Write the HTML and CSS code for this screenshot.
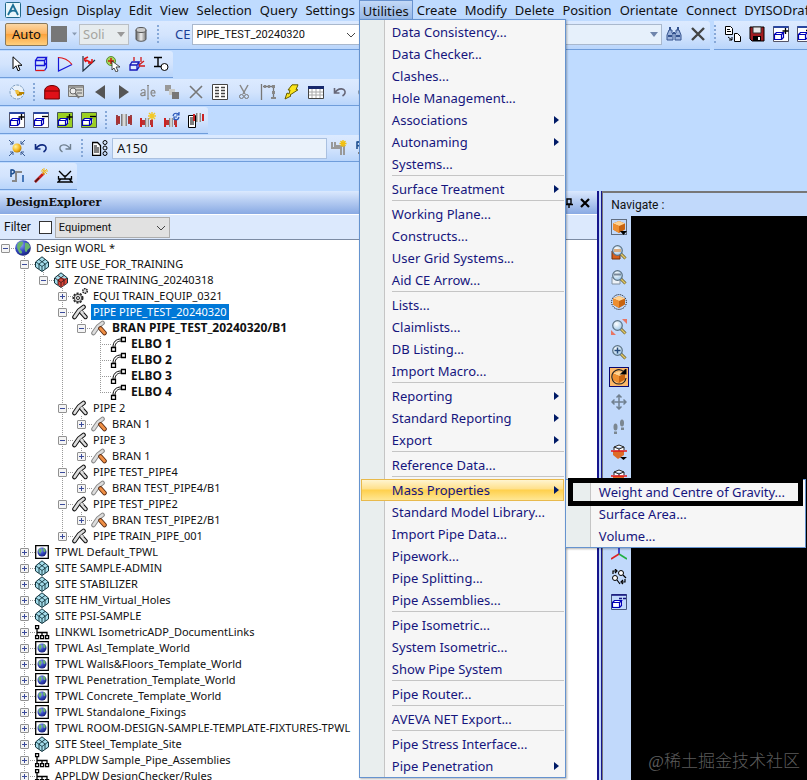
FILE: index.html
```html
<!DOCTYPE html>
<html lang="en">
<head>
<meta charset="UTF-8" />
<meta name="viewport" content="width=device-width, initial-scale=1" />
<title>Design</title>
<link rel="stylesheet" href="styles.css">
</head>
<body>

<!-- Icon set -->
<svg class="sprite" aria-hidden="true">
  <defs>
    <linearGradient id="steel" x1="0" y1="0" x2="1" y2="0"><stop offset="0" stop-color="#666"/><stop offset=".5" stop-color="#eee"/><stop offset="1" stop-color="#777"/></linearGradient>
    <radialGradient id="earth" cx=".35" cy=".3" r=".8"><stop offset="0" stop-color="#9aaef5"/><stop offset=".5" stop-color="#3447c4"/><stop offset="1" stop-color="#141c6c"/></radialGradient>
    <radialGradient id="gold" cx=".35" cy=".35" r=".7"><stop offset="0" stop-color="#fff3a0"/><stop offset=".6" stop-color="#f5b820"/><stop offset="1" stop-color="#b87800"/></radialGradient>
    <radialGradient id="lens" cx=".4" cy=".35" r=".7"><stop offset="0" stop-color="#fff"/><stop offset="1" stop-color="#9cc7e8"/></radialGradient>

    <symbol id="app" viewBox="0 0 16 16"><rect x=".5" y=".5" width="15" height="15" rx="1" fill="#e9f6fb" stroke="#21688a"/><path d="M3 13 8 3l5 10M5 10c2-2 4-2 7 0" fill="none" stroke="#1c6f96" stroke-width="1.8"/></symbol>
    <symbol id="cylinder" viewBox="0 0 16 16"><path d="M3 4v9c0 3 10 3 10 0V4z" fill="url(#steel)" stroke="#555"/><ellipse cx="8" cy="4" rx="5" ry="2.5" fill="#ccc" stroke="#555"/></symbol>
    <symbol id="find" viewBox="0 0 16 16"><path d="M3 4h3v3l1 1v6H1V9zM13 4h-3v3L9 8v6h6V9z" fill="#9db4dd" stroke="#34528e"/><path d="M4 1v3M12 1v3M7 7h2M2 10h4M10 10h4" stroke="#34528e" stroke-width="2"/></symbol>
    <symbol id="cross" viewBox="0 0 16 16"><path d="M2 2l12 12M14 2 2 14" stroke="#444" stroke-width="2.4"/></symbol>
    <symbol id="copy" viewBox="0 0 16 16"><path d="M.5.5h5l2 2v6h-7zM9.500 7.500h3l3 3v5h-6z" fill="#fff" stroke="#000"/><path d="M2 3.500h3M2 5.500h4M3 11l4 3M7 11v3H4" fill="none" stroke="#000"/></symbol>
    <symbol id="save" viewBox="0 0 16 16"><path d="M1 1h14v14H3l-2-2z" fill="#a11c20" stroke="#000"/><path d="M4 1h8v6H4z" fill="#e8e8e8" stroke="#333"/><path d="M4 10h8v5H4z"/><path d="M9 11h2v3H9z" fill="#fff"/></symbol>
    <symbol id="boxes" viewBox="0 0 16 16"><path d="M4.500 6.500h7v4l-2 2h-8v-4z" fill="#fff"/><path d="M1.500 8.500h7v5h-7zM1.500 8.500l2-2h7l-2 2M10.500 6.500v5l-2 2" fill="none" stroke="#0000b8" stroke-width="1.200"/></symbol>
    <symbol id="boxadd" viewBox="0 0 16 16"><path d="M.5.5h15v15H.500z" fill="#fff" stroke="#556"/><path d="M.5 1h15" stroke="#2946a0" stroke-width="2"/><use href="#boxes"/><path d="M12.500 2v6M9.500 5h6" stroke="#000" stroke-width="1.300"/></symbol>
    <symbol id="boxdel" viewBox="0 0 16 16"><path d="M.5.5h15v15H.500z" fill="#fff" stroke="#556"/><path d="M.5 1h15" stroke="#2946a0" stroke-width="2"/><use href="#boxes"/><path d="M9 4.500h6" stroke="#000" stroke-width="1.300"/></symbol>
    <symbol id="greenadd" viewBox="0 0 16 16"><path d="M.5.5h15v15H.500z" fill="#9bcf22" stroke="#455"/><use href="#boxes"/><path d="M12.500 2v6M9.500 5h6" stroke="#000" stroke-width="1.300"/></symbol>
    <symbol id="greendel" viewBox="0 0 16 16"><path d="M.5.5h15v15H.500z" fill="#9bcf22" stroke="#455"/><use href="#boxes"/><path d="M9 4.500h6" stroke="#000" stroke-width="1.300"/></symbol>

    <symbol id="cursor" viewBox="0 0 16 16"><path d="M4 .8v12l3-3 2 5 2-1-2-4.500h4z" fill="#fff" stroke="#000"/></symbol>
    <symbol id="box3d" viewBox="0 0 16 16"><path d="M2.500 4.500h9v5h-9zM2.500 4.500l2-3h9l-2 3M13.500 1.500v10l-2 3M11.500 9.500l2-3" fill="none" stroke="#1616d8" stroke-width="1.300"/><path d="M2.500 9.500v5" stroke="#1616d8"/><path d="M2.500 14.500h9" fill="none" stroke="#e01515" stroke-width="1.300"/></symbol>
    <symbol id="arc" viewBox="0 0 16 16"><path d="M1.500 1v14L15 8.500" fill="none" stroke="#1616d8" stroke-width="1.200"/><path d="M1 1.500c6 0 10 2 14 7" fill="none" stroke="#e01515" stroke-width="1.200"/></symbol>
    <symbol id="angle" viewBox="0 0 16 16"><path d="M2 0v15L14 4" fill="none" stroke="#234" stroke-width="1.200"/><path d="M3 3l8 4M3 3l4-2M3 3l2 3M11 7V3M11 7H7" stroke="#e01515" stroke-width="1.500"/></symbol>
    <symbol id="pick" viewBox="0 0 16 16"><circle cx="6" cy="5" r="4.500" fill="#a4d65b" stroke="#5a8f35"/><path d="M6 2v6M3 5h6" stroke="#d01a10" stroke-width="1.500"/><path d="M7 5v9l2-2 2 4 2-1-2-4h4z" fill="#fff" stroke="#222" stroke-width=".8"/></symbol>
    <symbol id="place" viewBox="0 0 16 16"><path d="M1 9h7v5H1zM1 9l2-3h7l-2 3M10 6v5l-2 3" fill="#dfeaff" stroke="#1616b8" stroke-width="1.300"/><path d="M5 5V1M12 1v5M10 9l5-4M10 10h6" stroke="#d01a1a" stroke-width="1.300"/></symbol>
    <symbol id="tee" viewBox="0 0 16 16"><path d="M1 1.500h8M5 1.500v9M1 10.500h8" stroke="#000" stroke-width="1.400"/><circle cx="11.500" cy="11" r="3.500" fill="#fff" stroke="#000"/></symbol>

    <symbol id="palette" viewBox="0 0 16 16"><circle cx="8" cy="8" r="7" fill="#e9f1fa" stroke="#7c9cbd" stroke-dasharray="3 1"/><path d="M6 6h3l2 2v2h-4z" fill="#f0c040"/><path d="M10 9h5M8 11l5-1" stroke="#b98400" stroke-width="2"/><path d="M3 4l3 3" stroke="#4a7dc0" stroke-dasharray="1 1"/></symbol>
    <symbol id="shop" viewBox="0 0 16 16"><path d="M.7 15V6c1-6 13.600-6 14.600 0v9z" fill="#e01018" stroke="#6a0000"/><path d="M1 7h14" stroke="#7a0000"/></symbol>
    <symbol id="search" viewBox="0 0 16 16"><path d="M.5 1.500h15v11H.500z" fill="#d5d5cf" stroke="#777"/><path d="M1 3h14M8 6h6M9 9h5" stroke="#888" stroke-width="1.500"/><circle cx="5" cy="7" r="3" fill="#eee" stroke="#666"/><path d="M7 9l4 5" stroke="#777" stroke-width="2"/></symbol>
    <symbol id="prev" viewBox="0 0 16 16"><path d="M13 1v14L3 8z" fill="#555"/></symbol>
    <symbol id="next" viewBox="0 0 16 16"><path d="M3 1v14l10-7z" fill="#555"/></symbol>
    <symbol id="rename" viewBox="0 0 16 16"><path d="M1 7c1-2 4-2 4 0v5M5 9C2 8 0 10 1 11s3 1 4-1M11 9h4c0-4-4-3-4 0s3 4 4 2M8 2v13M7 1.500h2M7 15h2" fill="none" stroke="#888" stroke-width="1.200"/></symbol>
    <symbol id="group" viewBox="0 0 16 16"><path d="M1 1h6v6H1z" fill="#999"/><path d="M5 5h6v6H5z" fill="#c9cbc9"/><path d="M8 8h7v7H8z" fill="#777"/></symbol>
    <symbol id="remove" viewBox="0 0 16 16"><path d="M2 2l12 12M14 2 2 14" stroke="#777" stroke-width="1.600"/></symbol>
    <symbol id="list" viewBox="0 0 16 16"><path d="M.5.5h15v15H.500z" fill="#fff" stroke="#444"/><path d="M3 3.500h4M9 3.500h4M3 6.500h4M9 6.500h4M3 9.500h4M9 9.500h4M3 12.500h4M9 12.500h4" stroke="#444" stroke-width="1.600"/></symbol>
    <symbol id="cut" viewBox="0 0 16 16"><path d="M4 1l5 9M12 1l-5 9" stroke="#888" stroke-width="1.500"/><circle cx="5.500" cy="12.500" r="2" fill="none" stroke="#777"/><circle cx="10.500" cy="12.500" r="2" fill="none" stroke="#777"/></symbol>
    <symbol id="frame" viewBox="0 0 16 16"><path d="M1.500 0v16M3 2.500h11M13.500 2v11" fill="none" stroke="#777" stroke-width="1.300"/><path d="M4 1h2v3H4zM8 1h2v3H8zM12 1h3v3h-3zM12 7h3v3h-3zM11 13h5v2h-5z" fill="#888"/></symbol>
    <symbol id="bolt" viewBox="0 0 16 16"><path d="M8 .8h6l-2 5h2L6 11l1 1-6 3 2-6 2 1 1-4H4z" fill="#fbe51b" stroke="#665d00"/></symbol>
    <symbol id="table" viewBox="0 0 16 16"><path d="M.5 2.500h15v12H.500z" fill="#fff" stroke="#444"/><path d="M0 2h16v3H0z" fill="#16286c"/><path d="M1 8h14M1 11h14M4 5v9M8 5v9M12 5v9" stroke="#aaa"/></symbol>
    <symbol id="undo" viewBox="0 0 16 16"><path d="M2.500 4v5h5M3 9c3-6 11-5 10 0-.3 1.500-1 2-2.500 3" fill="none" stroke="currentColor" stroke-width="1.600"/></symbol>
    <symbol id="redo" viewBox="0 0 16 16"><path d="M13.500 4v5h-5M13 9C10 3 2 4 3 9c.3 1.500 1 2 2.500 3" fill="none" stroke="#708090" stroke-width="1.400"/></symbol>

    <symbol id="flange" viewBox="0 0 16 16"><path d="M1 3v10M3 4v8M13 4v8M15 3v10" stroke="#8c1a1a" stroke-width="1.600"/><path d="M0 5h4v6H0zM12 5h4v6h-4z" fill="#a33"/><path d="M5 2h6v12H5z" fill="url(#steel)"/></symbol>
    <symbol id="flangenew" viewBox="0 0 16 16"><path d="M1 6v9M12 7v8" stroke="#c22" stroke-width="2"/><path d="M2 8h3v5H2zM10 8h3v5h-3z" fill="#b33"/><path d="M5 6h4v9H5z" fill="url(#steel)"/><path d="M12 0v8M8 4h8M9 1l6 6M15 1 9 7" stroke="#f2c928" stroke-width="1.400"/></symbol>
    <symbol id="flangeturn" viewBox="0 0 16 16"><path d="M1 6v9M12 8v7" stroke="#c22" stroke-width="2"/><path d="M2 8h3v5H2zM10 8h3v5h-3z" fill="#b33"/><path d="M5 6h4v9H5z" fill="url(#steel)"/><path d="M9 4c1-4 5-3 6-1M15 0v3h-3M15 5c-1 4-5 3-5 1M10 8V5h3" fill="none" stroke="#2956b8" stroke-width="1.200"/></symbol>
    <symbol id="flangelist" viewBox="0 0 16 16"><path d="M.5 3.500h7v12h-7z" fill="#fff" stroke="#000"/><path d="M2 6h4M2 8h4M2 10h4M2 12h4" stroke="#000"/><path d="M6 2v7M15 2v7" stroke="#c22" stroke-width="2"/><path d="M8 1h5v9H8z" fill="url(#steel)"/></symbol>

    <symbol id="explode" viewBox="0 0 16 16"><circle cx="8" cy="8" r="4.500" fill="url(#gold)"/><path d="M0 0l4 4M16 0l-4 4M0 16l4-4M16 16l-4-4M1 4h3V1M15 4h-3V1M1 12h3v3M15 12h-3v3" fill="none" stroke="#3a5a90"/></symbol>
    <symbol id="spec" viewBox="0 0 16 16"><path d="M.5 2.500h5l3 3v10h-8z" fill="#fff" stroke="#000" stroke-width="1.300"/><path d="M2 6h3M2 8h5M2 10h5M2 12h5" stroke="#000"/><circle cx="13" cy="2.500" r="2" fill="none" stroke="#000"/><circle cx="13" cy="8" r="2" fill="none" stroke="#000"/><circle cx="13" cy="13.500" r="2" fill="none" stroke="#000"/></symbol>
    <symbol id="pipenew" viewBox="0 0 16 16"><path d="M1 2v6h9v7M4 2v4h9v9" fill="none" stroke="#999" stroke-width="2"/><path d="M12 0v7M8.500 3.500h7M9.500 1l5 5M14.500 1l-5 5" stroke="#f2c010" stroke-width="1.400"/></symbol>
    <symbol id="pipeline" viewBox="0 0 16 16"><path d="M2 9V2c4-1 5 4 0 4" fill="none" stroke="#205090" stroke-width="1.600"/><path d="M3 13h4V4h6M14 7v7" fill="none" stroke="#888" stroke-width="2"/><path d="M14 7v7" stroke="#4677b8" stroke-width="2"/></symbol>
    <symbol id="wand" viewBox="0 0 16 16"><path d="M2 14l9-9" stroke="#c81f1f" stroke-width="2.600"/><path d="M2 14l4-4" stroke="#4b1414" stroke-width="1.500"/><path d="M11 0v7M8 3h7M9 1l5 5M14 1 9 6" stroke="#f0b820"/></symbol>
    <symbol id="support" viewBox="0 0 16 16"><path d="M2 3l5 5h2l5-5M8 8v3M1.500 8v3h13V8M4 11l-3 3h14l-3-3" fill="none" stroke="#000" stroke-width="1.300"/></symbol>

    <symbol id="chev" viewBox="0 0 10 6"><path d="M1 1l4 4 4-4" fill="none" stroke="#444"/></symbol>
    <symbol id="tri" viewBox="0 0 8 5"><path d="M0 0h8L4 5z" fill="currentColor"/></symbol>
    <symbol id="arrow" viewBox="0 0 5 8"><path d="M0 0v8l5-4z" fill="#001a66"/></symbol>
    <symbol id="pin" viewBox="0 0 10 10"><path d="M3 1h4v5H3zM1 6.500h8M5 7v3" fill="none" stroke="#000" stroke-width="1.400"/></symbol>
    <symbol id="close" viewBox="0 0 10 10"><path d="M1 1l8 8M9 1 1 9" stroke="#000" stroke-width="2.200"/></symbol>

    <!-- Tree -->
    <symbol id="globe" viewBox="0 0 16 16"><circle cx="8" cy="8" r="7.800" fill="url(#earth)"/><path d="M3 3c3-2 5-2 5 0S6 6 5 8s2 2 2 4-2 2-3 0-3-5-1-9zM10 3c3-1 5 2 5 4s-2 1-3 4-3-1-2-4z" fill="#69b56c"/></symbol>
    <symbol id="world" viewBox="0 0 16 16"><path d="M1.700 1.700h12.600v12.600H1.700z" fill="#fff" stroke="#000" stroke-width="1.300"/><circle cx="8" cy="8" r="4.500" fill="url(#earth)"/><path d="M5 5c3-1 3 2 2 3s0 3-1 2-2-3-1-5zM9 4c3 0 3 3 2 4s-2-1-2-4z" fill="#69b56c"/></symbol>
    <symbol id="site" viewBox="0 0 16 16"><path d="M8 .8 14.500 6v5L8 15.500 1.500 11V6z" fill="#a4dcea" stroke="#12333c"/><path d="M2 6l6 4.500L14 6M8 10.500V15M5 3.500l6 4.500v5M11 3.500 5 8v5" fill="none" stroke="#12333c" stroke-width=".9"/></symbol>
    <symbol id="zone" viewBox="0 0 16 16"><path d="M8 .8 14.500 6v5L8 15.500 1.500 11V6z" fill="#a4dcea" stroke="#12333c"/><path d="M5 8l3-2.500L14 7v4l-6 4.500-3-3z" fill="#d9463a"/><path d="M2 6l6 4.500L14 6M8 10.500V15M5 3.500l6 4.500v5M11 3.500 5 8v5" fill="none" stroke="#401818" stroke-width=".9"/></symbol>
    <symbol id="equi" viewBox="0 0 16 16"><circle cx="6" cy="10" r="4.500" fill="#ddd" stroke="#222" stroke-width="2" stroke-dasharray="2 1.200"/><circle cx="6" cy="10" r="3.800" fill="#ddd" stroke="#444"/><circle cx="6" cy="10" r="1.500" fill="#fff" stroke="#222"/><circle cx="13" cy="3" r="2.300" fill="#ddd" stroke="#222" stroke-width="1.500" stroke-dasharray="1.500 .7"/></symbol>
    <symbol id="pipe" viewBox="0 0 16 16"><path d="M9 8l4.500 5" stroke="#111" stroke-width="4.400" stroke-linecap="round"/><path d="M9 8l4.500 5" stroke="#ddd" stroke-width="2.400" stroke-linecap="round"/><path d="M2.500 13 7 6.500l4.500-3.500" fill="none" stroke="#111" stroke-width="4.600" stroke-linecap="round"/><path d="M2.500 13 7 6.500l4.500-3.500" fill="none" stroke="#ddd" stroke-width="2.600" stroke-linecap="round"/><path d="M9 7l2 2.500" stroke="#ddd" stroke-width="2.400"/></symbol>
    <symbol id="bran" viewBox="0 0 16 16"><path d="M2.500 13 7 6.500l4.500-3.500" fill="none" stroke="#888" stroke-width="4.600" stroke-linecap="round"/><path d="M2.500 13 7 6.500l4.500-3.500" fill="none" stroke="#ddd" stroke-width="2.600" stroke-linecap="round"/><path d="M9.500 8.500l4 4.500" stroke="#5a2b12" stroke-width="4.600" stroke-linecap="round"/><path d="M9.500 8.500l4 4.500" stroke="#ef8f45" stroke-width="2.800" stroke-linecap="round"/></symbol>
    <symbol id="elbo" viewBox="0 0 16 16"><path d="M3 11c0-5 3-8 8-8M5 11c0-3 2-6 6-6" fill="none" stroke="#000"/><path d="M1.500 11.500h4v4h-4zM11.500 1.500h4v4h-4z" fill="#fff" stroke="#000" stroke-width="1.300"/></symbol>
    <symbol id="link" viewBox="0 0 16 16"><path d="M1.600 1.600h3v3h-3zM1.600 11.600h3v3h-3zM6.600 11.600h3v3h-3zM11.600 11.600h3v3h-3z" fill="#fff" stroke="#000" stroke-width="1.300"/><path d="M3 5v7M3 8.500h10V12M8 8.500V12" fill="none" stroke="#000" stroke-width="1.300"/></symbol>

    <!-- Navigate -->
    <symbol id="cube" viewBox="0 0 16 16"><path d="M8 2l6 2.500v6L8 14l-6-3.500v-6z" fill="#c86410"/><path d="M8 2l6 2.500L8 7 2 4.500z" fill="#ffd391"/><path d="M2 4.500 8 7v7l-6-3.500z" fill="#ed8f31"/></symbol>
    <symbol id="glass" viewBox="0 0 16 16"><path d="M9.500 9.500l5 5" stroke="#665a2b" stroke-width="3"/><path d="M9.500 9.500l5 5" stroke="#e2ca68" stroke-width="1.500"/><circle cx="6.500" cy="6.500" r="4.800" fill="url(#lens)" stroke="#5d7384" stroke-width="1.200"/></symbol>
    <symbol id="selbox" viewBox="0 0 16 16"><path d="M.5.5h15v15H.500z" fill="none" stroke="#000" stroke-dasharray="1 1"/><use href="#cube"/><path d="M9 12h7l-3.500 4z"/></symbol>
    <symbol id="zoomsel" viewBox="0 0 16 16"><path d="M1 7h8v8H1z" fill="#d9601b" stroke="#703008"/><use href="#glass"/><path d="M3 5h7v3H3z" fill="#d9ad81"/></symbol>
    <symbol id="zoomarea" viewBox="0 0 16 16"><path d="M1 8h8v7H1z" fill="#edf2f7" stroke="#8090a0"/><use href="#glass"/><path d="M3 5.500h7" stroke="#789" stroke-width="2"/></symbol>
    <symbol id="selround" viewBox="0 0 16 16"><circle cx="8" cy="8" r="7.400" fill="none" stroke="#000" stroke-dasharray="1 1"/><use href="#cube"/></symbol>
    <symbol id="zoomfit" viewBox="0 0 16 16"><use href="#glass"/><path d="M11 0h5v5zM0 11v5h5z" fill="#e87563"/></symbol>
    <symbol id="zoomin" viewBox="0 0 16 16"><use href="#glass"/><path d="M6.500 3.500v6M3.500 6.500h6" stroke="#244a7b" stroke-width="1.500"/></symbol>
    <symbol id="rotate" viewBox="0 0 16 16"><use href="#cube"/><path d="M13 3C8-2 0 2 1 9c1 8 13 8 14 0M10 5h5V0z" fill="none" stroke="#222" stroke-width="1.200"/><path d="M10 5h5V0z"/></symbol>
    <symbol id="pan" viewBox="0 0 16 16"><path d="M8 1v14M1 8h14M5.500 3.500 8 1l2.500 2.500M5.500 12.500 8 15l2.500-2.500M3.500 5.500 1 8l2.500 2.500M12.500 5.500 15 8l-2.500 2.500" fill="none" stroke="#708090" stroke-width="1.500"/></symbol>
    <symbol id="walk" viewBox="0 0 16 16"><ellipse cx="4.500" cy="8" rx="2" ry="3.500" fill="#7b8791"/><ellipse cx="11" cy="4" rx="2" ry="3.500" fill="#7b8791"/><path d="M3 12.500h3V15H3zM10 8.500h3V11h-3z" fill="#7b8791"/></symbol>
    <symbol id="clip" viewBox="0 0 16 16"><path d="M2 7v4l5 4 6-4V7z" fill="#dd6c28"/><path d="M3 6V3l5-2 5 2v3M3 3l5 2 5-2M8 5v2" fill="#fff" stroke="#222"/><path d="M0 7h16" stroke="#e01818" stroke-width="1.500"/><path d="M9 13h7l-3.500 3z"/></symbol>
    <symbol id="axes" viewBox="0 0 16 16"><path d="M8 0v10" stroke="#1616c8" stroke-width="1.500"/><path d="M8 10l-8 5" stroke="#d22" stroke-width="1.500"/><path d="M8 10l8 5" stroke="#20b040" stroke-width="1.500"/></symbol>
    <symbol id="swap" viewBox="0 0 16 16"><circle cx="10" cy="4" r="2.500" fill="#fff" stroke="#000"/><circle cx="4" cy="9" r="2.500" fill="#fff" stroke="#000"/><path d="M12 6l3 3M6 11l3 4M2 5V2h3M4 0l2 2-2 2M14 10v3h-3M12 11l-2 2 2 2" fill="none" stroke="#000" stroke-width="1.200"/></symbol>
    <symbol id="window" viewBox="0 0 16 16"><path d="M.5.5h15v15H.500z" fill="none" stroke="#44547c"/><path d="M.5 1h15M8 4.500h3M12 4.500h3" stroke="#111180" stroke-width="1.500"/><use href="#boxes"/></symbol>
  </defs>
</svg>

<nav class="menubar" aria-label="Main">
  <svg class="logo"><use href="#app"/></svg>
  <button>Design</button>
  <button>Display</button>
  <button>Edit</button>
  <button>View</button>
  <button>Selection</button>
  <button>Query</button>
  <button>Settings</button>
  <div class="menu-wrap">
    <button class="open" aria-expanded="true">Utilities</button>
    <!-- Utilities menu -->
    <ul class="menu">
      <li><button>Data Consistency...</button></li>
      <li><button>Data Checker...</button></li>
      <li><button>Clashes...</button></li>
      <li><button>Hole Management...</button></li>
      <li><button>Associations<svg><use href="#arrow"/></svg></button></li>
      <li><button>Autonaming<svg><use href="#arrow"/></svg></button></li>
      <li><button>Systems...</button></li>
      <li class="sep"></li>
      <li><button>Surface Treatment<svg><use href="#arrow"/></svg></button></li>
      <li class="sep"></li>
      <li><button>Working Plane...</button></li>
      <li><button>Constructs...</button></li>
      <li><button>User Grid Systems...</button></li>
      <li><button>Aid CE Arrow...</button></li>
      <li class="sep"></li>
      <li><button>Lists...</button></li>
      <li><button>Claimlists...</button></li>
      <li><button>DB Listing...</button></li>
      <li><button>Import Macro...</button></li>
      <li class="sep"></li>
      <li><button>Reporting<svg><use href="#arrow"/></svg></button></li>
      <li><button>Standard Reporting<svg><use href="#arrow"/></svg></button></li>
      <li><button>Export<svg><use href="#arrow"/></svg></button></li>
      <li class="sep"></li>
      <li><button>Reference Data...</button></li>
      <li class="sep"></li>
      <li class="has-sub">
        <button class="hot" aria-expanded="true">Mass Properties<svg><use href="#arrow"/></svg></button>
        <ul class="menu submenu">
          <li class="marked"><button>Weight and Centre of Gravity...</button></li>
          <li><button>Surface Area...</button></li>
          <li><button>Volume...</button></li>
        </ul>
      </li>
      <li><button>Standard Model Library...</button></li>
      <li><button>Import Pipe Data...</button></li>
      <li><button>Pipework...</button></li>
      <li><button>Pipe Splitting...</button></li>
      <li><button>Pipe Assemblies...</button></li>
      <li class="sep"></li>
      <li><button>Pipe Isometric...</button></li>
      <li><button>System Isometric...</button></li>
      <li><button>Show Pipe System</button></li>
      <li class="sep"></li>
      <li><button>Pipe Router...</button></li>
      <li class="sep"></li>
      <li><button>AVEVA NET Export...</button></li>
      <li class="sep"></li>
      <li><button>Pipe Stress Interface...</button></li>
      <li><button>Pipe Penetration<svg><use href="#arrow"/></svg></button></li>
    </ul>
  </div>
  <button>Create</button>
  <button>Modify</button>
  <button>Delete</button>
  <button>Position</button>
  <button>Orientate</button>
  <button>Connect</button>
  <button class="last">DYISODraf</button>
</nav>

<div class="toolbars">
  <div class="toolrow first">
    <div class="strip main">
      <button class="auto">Auto</button>
      <button class="swatch" aria-label="Colour"><span></span><svg><use href="#tri"/></svg></button>
      <span class="combo fill-style"><select aria-label="Fill" disabled><option>Soli</option></select><svg class="tri"><use href="#tri"/></svg></span>
      <button class="tool" aria-label="Solid"><svg><use href="#cylinder"/></svg></button>
      <i class="grip"></i>
      <label class="ce" for="ce">CE</label>
      <span class="combo element"><select id="ce"><option>PIPE_TEST_20240320</option></select><svg class="chev"><use href="#chev"/></svg></span>
      <span class="combo lookup"><select aria-label="Lists"><option></option></select><svg class="tri"><use href="#tri"/></svg></span>
      <button class="tool" aria-label="Find"><svg><use href="#find"/></svg></button>
      <button class="tool" aria-label="Clear"><svg><use href="#cross"/></svg></button>
    </div>
    <div class="strip rest">
      <i class="grip"></i>
      <button class="tool" aria-label="Copy"><svg><use href="#copy"/></svg></button>
      <button class="tool" aria-label="Save"><svg><use href="#save"/></svg></button>
      <button class="tool" aria-label="Add to view"><svg><use href="#boxadd"/></svg></button>
      <button class="tool" aria-label="Remove from view"><svg><use href="#boxdel"/></svg></button>
    </div>
  </div>

  <div class="toolrow">
    <div class="strip">
      <button class="tool" aria-label="Select"><svg><use href="#cursor"/></svg></button>
      <button class="tool" aria-label="Box"><svg><use href="#box3d"/></svg></button>
      <button class="tool" aria-label="Arc"><svg><use href="#arc"/></svg></button>
      <button class="tool" aria-label="Angle"><svg><use href="#angle"/></svg></button>
      <button class="tool" aria-label="Pick"><svg><use href="#pick"/></svg></button>
      <button class="tool" aria-label="Place"><svg><use href="#place"/></svg></button>
      <button class="tool" aria-label="Tee"><svg><use href="#tee"/></svg></button>
    </div>
  </div>

  <div class="toolrow">
    <div class="strip">
      <button class="tool" aria-label="Colours"><svg><use href="#palette"/></svg></button>
      <i class="grip"></i>
      <button class="tool" aria-label="Home"><svg><use href="#shop"/></svg></button>
      <button class="tool" aria-label="Search"><svg><use href="#search"/></svg></button>
      <button class="tool" aria-label="Previous"><svg><use href="#prev"/></svg></button>
      <button class="tool" aria-label="Next"><svg><use href="#next"/></svg></button>
      <button class="tool" aria-label="Rename"><svg><use href="#rename"/></svg></button>
      <button class="tool" aria-label="Group"><svg><use href="#group"/></svg></button>
      <button class="tool" aria-label="Delete"><svg><use href="#remove"/></svg></button>
      <button class="tool" aria-label="Attributes"><svg><use href="#list"/></svg></button>
      <button class="tool" aria-label="Cut"><svg><use href="#cut"/></svg></button>
      <button class="tool" aria-label="Frame"><svg><use href="#frame"/></svg></button>
      <button class="tool" aria-label="Run"><svg><use href="#bolt"/></svg></button>
      <button class="tool" aria-label="Table"><svg><use href="#table"/></svg></button>
      <button class="tool muted" aria-label="Undo"><svg><use href="#undo"/></svg></button>
      <button class="tool" aria-label="Redo"><svg><use href="#redo"/></svg></button>
    </div>
  </div>

  <div class="toolrow">
    <div class="strip">
      <button class="tool" aria-label="Add element"><svg><use href="#boxadd"/></svg></button>
      <button class="tool" aria-label="Remove element"><svg><use href="#boxdel"/></svg></button>
      <button class="tool" aria-label="Add list"><svg><use href="#greenadd"/></svg></button>
      <button class="tool" aria-label="Remove list"><svg><use href="#greendel"/></svg></button>
      <i class="grip"></i>
      <button class="tool" aria-label="Component"><svg><use href="#flange"/></svg></button>
      <button class="tool" aria-label="New component"><svg><use href="#flangenew"/></svg></button>
      <button class="tool" aria-label="Turn component"><svg><use href="#flangeturn"/></svg></button>
      <button class="tool" aria-label="Component list"><svg><use href="#flangelist"/></svg></button>
    </div>
  </div>

  <div class="toolrow">
    <div class="strip">
      <button class="tool" aria-label="Explode"><svg><use href="#explode"/></svg></button>
      <button class="tool navy" aria-label="Undo"><svg><use href="#undo"/></svg></button>
      <button class="tool" aria-label="Redo"><svg><use href="#redo"/></svg></button>
      <i class="grip"></i>
      <button class="tool" aria-label="Specification"><svg><use href="#spec"/></svg></button>
      <input class="spec" type="text" value="A150" aria-label="Default specification">
      <button class="tool" aria-label="New pipe"><svg><use href="#pipenew"/></svg></button>
      <button class="tool" aria-label="Pipe"><svg><use href="#pipeline"/></svg></button>
    </div>
  </div>

  <div class="toolrow">
    <div class="strip">
      <button class="tool" aria-label="Pipework"><svg><use href="#pipeline"/></svg></button>
      <button class="tool" aria-label="Edit"><svg><use href="#wand"/></svg></button>
      <button class="tool" aria-label="Supports"><svg><use href="#support"/></svg></button>
    </div>
  </div>
</div>

<main class="workspace">
  <section class="explorer">
    <header class="panel-title">
      <h2>DesignExplorer</h2>
      <button aria-label="Pin"><svg><use href="#pin"/></svg></button>
      <button aria-label="Close"><svg><use href="#close"/></svg></button>
    </header>
    <div class="filter">
      <label for="filter">Filter</label>
      <input type="checkbox" id="filter">
      <span class="combo kind"><select aria-label="Filter by"><option>Equipment</option></select><svg class="chev"><use href="#chev"/></svg></span>
    </div>

    <ul class="tree">
      <li>
        <div class="node"><button class="exp"></button><svg><use href="#globe"/></svg><a href="#">Design WORL *</a></div>
        <ul>
          <li>
            <div class="node"><button class="exp"></button><svg><use href="#site"/></svg><a href="#">SITE USE_FOR_TRAINING</a></div>
            <ul>
              <li>
                <div class="node"><button class="exp"></button><svg><use href="#zone"/></svg><a href="#">ZONE TRAINING_20240318</a></div>
                <ul>
                  <li><div class="node"><button class="exp plus"></button><svg><use href="#equi"/></svg><a href="#">EQUI TRAIN_EQUIP_0321</a></div></li>
                  <li>
                    <div class="node"><button class="exp"></button><svg><use href="#pipe"/></svg><a href="#" class="selected">PIPE PIPE_TEST_20240320</a></div>
                    <ul>
                      <li>
                        <div class="node strong"><button class="exp"></button><svg><use href="#bran"/></svg><a href="#">BRAN PIPE_TEST_20240320/B1</a></div>
                        <ul>
                          <li><div class="node leaf strong"><svg><use href="#elbo"/></svg><a href="#">ELBO 1</a></div></li>
                          <li><div class="node leaf strong"><svg><use href="#elbo"/></svg><a href="#">ELBO 2</a></div></li>
                          <li><div class="node leaf strong"><svg><use href="#elbo"/></svg><a href="#">ELBO 3</a></div></li>
                          <li><div class="node leaf strong"><svg><use href="#elbo"/></svg><a href="#">ELBO 4</a></div></li>
                        </ul>
                      </li>
                    </ul>
                  </li>
                  <li>
                    <div class="node"><button class="exp"></button><svg><use href="#pipe"/></svg><a href="#">PIPE 2</a></div>
                    <ul><li><div class="node"><button class="exp plus"></button><svg><use href="#bran"/></svg><a href="#">BRAN 1</a></div></li></ul>
                  </li>
                  <li>
                    <div class="node"><button class="exp"></button><svg><use href="#pipe"/></svg><a href="#">PIPE 3</a></div>
                    <ul><li><div class="node"><button class="exp plus"></button><svg><use href="#bran"/></svg><a href="#">BRAN 1</a></div></li></ul>
                  </li>
                  <li>
                    <div class="node"><button class="exp"></button><svg><use href="#pipe"/></svg><a href="#">PIPE TEST_PIPE4</a></div>
                    <ul><li><div class="node"><button class="exp plus"></button><svg><use href="#bran"/></svg><a href="#">BRAN TEST_PIPE4/B1</a></div></li></ul>
                  </li>
                  <li>
                    <div class="node"><button class="exp"></button><svg><use href="#pipe"/></svg><a href="#">PIPE TEST_PIPE2</a></div>
                    <ul><li><div class="node"><button class="exp plus"></button><svg><use href="#bran"/></svg><a href="#">BRAN TEST_PIPE2/B1</a></div></li></ul>
                  </li>
                  <li><div class="node"><button class="exp plus"></button><svg><use href="#pipe"/></svg><a href="#">PIPE TRAIN_PIPE_001</a></div></li>
                </ul>
              </li>
            </ul>
          </li>
          <li><div class="node"><button class="exp plus"></button><svg><use href="#world"/></svg><a href="#">TPWL Default_TPWL</a></div></li>
          <li><div class="node"><button class="exp plus"></button><svg><use href="#site"/></svg><a href="#">SITE SAMPLE-ADMIN</a></div></li>
          <li><div class="node"><button class="exp plus"></button><svg><use href="#site"/></svg><a href="#">SITE STABILIZER</a></div></li>
          <li><div class="node"><button class="exp plus"></button><svg><use href="#site"/></svg><a href="#">SITE HM_Virtual_Holes</a></div></li>
          <li><div class="node"><button class="exp plus"></button><svg><use href="#site"/></svg><a href="#">SITE PSI-SAMPLE</a></div></li>
          <li><div class="node"><button class="exp plus"></button><svg><use href="#link"/></svg><a href="#">LINKWL IsometricADP_DocumentLinks</a></div></li>
          <li><div class="node"><button class="exp plus"></button><svg><use href="#world"/></svg><a href="#">TPWL Asl_Template_World</a></div></li>
          <li><div class="node"><button class="exp plus"></button><svg><use href="#world"/></svg><a href="#">TPWL Walls&amp;Floors_Template_World</a></div></li>
          <li><div class="node"><button class="exp plus"></button><svg><use href="#world"/></svg><a href="#">TPWL Penetration_Template_World</a></div></li>
          <li><div class="node"><button class="exp plus"></button><svg><use href="#world"/></svg><a href="#">TPWL Concrete_Template_World</a></div></li>
          <li><div class="node"><button class="exp plus"></button><svg><use href="#world"/></svg><a href="#">TPWL Standalone_Fixings</a></div></li>
          <li><div class="node"><button class="exp plus"></button><svg><use href="#world"/></svg><a href="#">TPWL ROOM-DESIGN-SAMPLE-TEMPLATE-FIXTURES-TPWL</a></div></li>
          <li><div class="node"><button class="exp plus"></button><svg><use href="#site"/></svg><a href="#">SITE Steel_Template_Site</a></div></li>
          <li><div class="node"><button class="exp plus"></button><svg><use href="#link"/></svg><a href="#">APPLDW Sample_Pipe_Assemblies</a></div></li>
          <li class="more"><div class="node"><button class="exp plus"></button><svg><use href="#link"/></svg><a href="#">APPLDW DesignChecker/Rules</a></div></li>
        </ul>
      </li>
    </ul>
  </section>

  <div class="splitter"></div>

  <section class="view">
    <h3>Navigate :</h3>
    <div class="view-body">
      <div class="navigate">
        <button aria-label="Select"><svg><use href="#selbox"/></svg></button>
        <button aria-label="Zoom to selection"><svg><use href="#zoomsel"/></svg></button>
        <button aria-label="Zoom to area"><svg><use href="#zoomarea"/></svg></button>
        <button aria-label="Centre"><svg><use href="#selround"/></svg></button>
        <button aria-label="Zoom to fit"><svg><use href="#zoomfit"/></svg></button>
        <button aria-label="Zoom in"><svg><use href="#zoomin"/></svg></button>
        <button class="on" aria-label="Rotate"><svg><use href="#rotate"/></svg></button>
        <button aria-label="Pan"><svg><use href="#pan"/></svg></button>
        <button aria-label="Walk"><svg><use href="#walk"/></svg></button>
        <button aria-label="Clip"><svg><use href="#clip"/></svg></button>
        <button aria-label="Clip box"><svg><use href="#clip"/></svg></button>
        <button aria-label="Clip plane"><svg><use href="#clip"/></svg></button>
        <button aria-label="Look"><svg><use href="#glass"/></svg></button>
        <button aria-label="Axes"><svg><use href="#axes"/></svg></button>
        <button aria-label="Swap"><svg><use href="#swap"/></svg></button>
        <button aria-label="Window"><svg><use href="#window"/></svg></button>
      </div>
      <div class="canvas"><span>@稀土掘金技术社区</span></div>
    </div>
  </section>
</main>

</body>
</html>
```

FILE: styles.css
```css
* {
  box-sizing: border-box;
}

html, body {
  margin: 0;
  height: 100%;
  overflow: hidden;
}

body {
  display: flex;
  flex-direction: column;
  background: #bfdbff;
  color: #111;
  font-family: 'Noto Sans', 'Noto Sans CJK SC', sans-serif;
  font-size: 13px;
}

.sprite {
  position: absolute;
  width: 0;
  height: 0;
}

ul {
  list-style: none;
  margin: 0;
  padding: 0;
}

button {
  margin: 0;
  padding: 0;
  border: none;
  background: none;
  color: inherit;
  font: inherit;
}

a {
  color: inherit;
  text-decoration: none;
}

/* Menu bar */
.menubar {
  display: flex;
  flex: none;
  height: 21px;
  padding-left: 5px;
  white-space: nowrap;
}

.menubar > button,
.menu-wrap > button {
  flex: none;
  height: 20px;
  padding: 0 4px;
  line-height: 20px;
}

.menubar > .last {
  flex: 1;
  min-width: 0;
  overflow: hidden;
  padding-right: 0;
  text-align: left;
}

.logo {
  flex: none;
  width: 16px;
  height: 16px;
  margin: 2px 1px 0 0;
}

.menu-wrap {
  flex: none;
  position: relative;
  z-index: 10;
}

.menu-wrap > .open {
  border: 1px solid #6a93cf;
  border-bottom: none;
  padding: 0 3px;
  line-height: 18px;
  background: linear-gradient(#c3d9f7, #93b5e6);
}

.menu {
  position: absolute;
  top: 19px;
  left: 0;
  width: 207px;
  padding: 1px 1px 0;
  border: 1px solid #6593cf;
  background: linear-gradient(90deg, #e9eeee 24px, #c5c5c5 24px, #c5c5c5 25px, #f6f6f6 25px);
  box-shadow: 1px 1px 2px rgba(0, 0, 0, 0.3);
  color: #15157d;
}

.menu button {
  display: flex;
  align-items: center;
  justify-content: space-between;
  width: 100%;
  height: 22px;
  padding: 0 5px 0 31px;
  text-align: left;
}

.menu svg {
  width: 5px;
  height: 8px;
}

.menu .sep {
  height: 3px;
  margin-left: 31px;
  border-top: 1px solid #c5c5c5;
}

.menu .hot {
  border: 1px solid #e8b94c;
  padding: 0 4px 0 30px;
  background: linear-gradient(#fff4cf, #ffe08a 45%, #ffd04c 50%, #ffe794);
}

.has-sub {
  position: relative;
}

.submenu {
  top: 0;
  left: 204px;
  width: 241px;
}

.submenu button {
  padding-left: 32px;
}

.marked {
  outline: 5px solid #000;
  outline-offset: -2px;
  margin: 0 4px;
}

.marked button {
  padding-left: 28px;
}

/* Toolbars */
.toolbars {
  flex: none;
}

.toolrow {
  display: flex;
  height: 28px;
  gap: 4px;
}

.toolrow.first {
  height: 30px;
}

.strip {
  display: flex;
  align-items: center;
  height: 27px;
  padding-left: 5px;
  border-bottom: 1px solid #6f9ddb;
  border-radius: 0 3px 0 0;
  background: linear-gradient(#dceaff, #d3e4fd 50%, #b9d5fb);
}

.first .strip {
  height: 29px;
  padding-bottom: 2px;
}

.strip.main {
  flex: 0 0 88%;
}

.first .rest {
  flex: 1;
  overflow: hidden;
  padding-left: 0;
}

.rest .grip {
  margin-left: 0;
}

.tool {
  flex: none;
  width: 24px;
  height: 24px;
  padding: 4px;
}

.tool svg {
  display: block;
  width: 16px;
  height: 16px;
}

.muted {
  color: #667;
}

.navy {
  color: #102a80;
}

.grip {
  flex: none;
  width: 2px;
  height: 18px;
  margin: 0 5px 0 4px;
  background: repeating-linear-gradient(#86a8d8 0, #86a8d8 2px, transparent 2px, transparent 4px);
}

.auto {
  flex: none;
  width: 43px;
  height: 23px;
  border: 1px solid #8a7a5c;
  border-radius: 2px;
  background: linear-gradient(#fbd6a4, #fdb562 45%, #fba33d 50%, #ffcf7d);
}

.swatch {
  display: flex;
  flex: none;
  align-items: center;
  gap: 5px;
  padding: 0 2px 0 3px;
}

.swatch span {
  width: 16px;
  height: 16px;
  background: #777;
}

.swatch svg {
  width: 5px;
  height: 4px;
  color: #8a9bb3;
}

.combo {
  display: flex;
  position: relative;
}

.combo select {
  width: 100%;
  height: 21px;
  padding: 0 3px;
  border: 1px solid #a9b8cd;
  border-radius: 0;
  appearance: none;
  background: #fff;
  color: #111;
  font-family: Roboto, 'Liberation Sans', sans-serif;
  font-size: 11px;
}

.combo svg {
  position: absolute;
  top: 8px;
  right: 4px;
  pointer-events: none;
}

.chev {
  width: 10px;
  height: 6px;
}

.tri {
  width: 8px;
  height: 5px;
  color: #6f85ac;
}

.fill-style {
  flex: none;
  width: 50px;
}

.combo.fill-style select {
  border-color: #b9bfc6;
  background: #e7ecee;
  color: #a5a5a0;
  font: inherit;
  opacity: 1;
}

.fill-style .tri {
  color: #999;
}

.ce {
  margin: 0 2px 0 11px;
  color: #1c3f94;
}

.element {
  flex: none;
  width: 168px;
}

.lookup {
  flex: 1;
  margin-left: 8px;
}

.lookup select {
  background: #e6f0fb;
}

.spec {
  width: 215px;
  height: 21px;
  padding: 0 4px;
  border: 1px solid #a9c0e0;
  background: #eaf2fb;
  color: #111;
  font: inherit;
}

/* Workspace */
.workspace {
  display: grid;
  grid-template-columns: 74% 5px 1fr;
  flex: 1;
  min-height: 0;
}

.explorer {
  display: flex;
  flex-direction: column;
  min-height: 0;
  background: #fff;
}

.panel-title {
  display: flex;
  flex: none;
  align-items: center;
  gap: 6px;
  height: 23px;
  padding: 0 7px 0 6px;
  background: linear-gradient(#dbe9fe, #88a9e3);
}

.panel-title h2 {
  flex: 1;
  margin: 0;
  font-family: 'DejaVu Serif', 'Liberation Serif', serif;
  font-size: 11px;
  font-weight: bold;
}

.panel-title svg {
  display: block;
  width: 10px;
  height: 10px;
}

.filter {
  display: flex;
  flex: none;
  align-items: center;
  height: 25px;
  margin-top: 1px;
  padding-left: 4px;
  border-bottom: 1px solid #7c8ba3;
  background: #dce9fd;
  font-family: Roboto, 'Liberation Sans', sans-serif;
  font-size: 12px;
}

.filter input {
  appearance: none;
  width: 13px;
  height: 13px;
  margin: 0 3px 0 8px;
  border: 1px solid #333;
  background: #fff;
}

.kind {
  width: 115px;
}

.kind select {
  border-color: #adadad;
  background: #e1e1e1;
}

/* Tree */
.tree {
  flex: 1;
  overflow: hidden;
  padding-left: 1px;
  font-size: 11px;
  white-space: nowrap;
}

.tree ul {
  padding-left: 19px;
}

.tree ul > li {
  background: repeating-linear-gradient(#999 0, #999 1px, transparent 1px, transparent 2px) 4px 0 / 1px 100% no-repeat;
}

.tree ul > li:last-child {
  background-size: 1px 8px;
}

.tree ul > li.more {
  background-size: 1px 100%;
}

.node {
  display: flex;
  align-items: center;
  height: 16px;
  background: repeating-linear-gradient(90deg, #999 0, #999 1px, transparent 1px, transparent 2px) 4px 8px / 12px 1px no-repeat;
}

.node svg {
  flex: none;
  width: 16px;
  height: 16px;
  margin: 0 3px 0 5px;
}

.leaf svg {
  margin-left: 14px;
}

.node a {
  padding: 0 2px;
  line-height: 16px;
}

.node .selected {
  background: #0078d7;
  color: #fff;
}

.strong {
  font-size: 12px;
  font-weight: bold;
}

.exp {
  flex: none;
  width: 9px;
  height: 9px;
  border: 1px solid #919191;
  border-radius: 1px;
  background: linear-gradient(#3b4b9b, #3b4b9b) center / 5px 1px no-repeat, #f4f4f4;
}

.exp.plus {
  background: linear-gradient(#3b4b9b, #3b4b9b) center / 5px 1px no-repeat, linear-gradient(#3b4b9b, #3b4b9b) center / 1px 5px no-repeat, #f4f4f4;
}

/* 3D view */
.splitter {
  border: solid #16168c;
  border-width: 0 1px 0 2px;
  background: #c2d8f8;
}

.view {
  display: flex;
  flex-direction: column;
  min-width: 0;
  min-height: 0;
  border-top: 2px solid #777;
  border-left: 1px solid #777;
  background: #c1d9fb;
}

.view h3 {
  margin: 0;
  padding: 2px 0 0 8px;
  font-family: Roboto, 'Liberation Sans', sans-serif;
  font-size: 12px;
  font-weight: normal;
  line-height: 21px;
}

.view-body {
  display: flex;
  flex: 1;
  min-height: 0;
}

.navigate {
  display: flex;
  flex: none;
  flex-direction: column;
  gap: 5px;
  width: 28px;
  padding: 1px 0 0 6px;
}

.navigate button {
  flex: none;
  width: 20px;
  height: 20px;
  padding: 2px;
}

.navigate svg {
  display: block;
  width: 16px;
  height: 16px;
}

.navigate .on {
  padding: 1px;
  border: 1px solid #0a0a70;
  background: #fdb868;
}

.canvas {
  display: flex;
  flex: 1;
  align-items: flex-end;
  justify-content: flex-end;
  padding: 0 7px 6px 0;
  background: #000;
  color: #5c5c5c;
  font-family: 'Liberation Serif', 'Noto Sans CJK SC', sans-serif;
  font-size: 17px;
  font-weight: 300;
  line-height: 24px;
  white-space: nowrap;
}
```
